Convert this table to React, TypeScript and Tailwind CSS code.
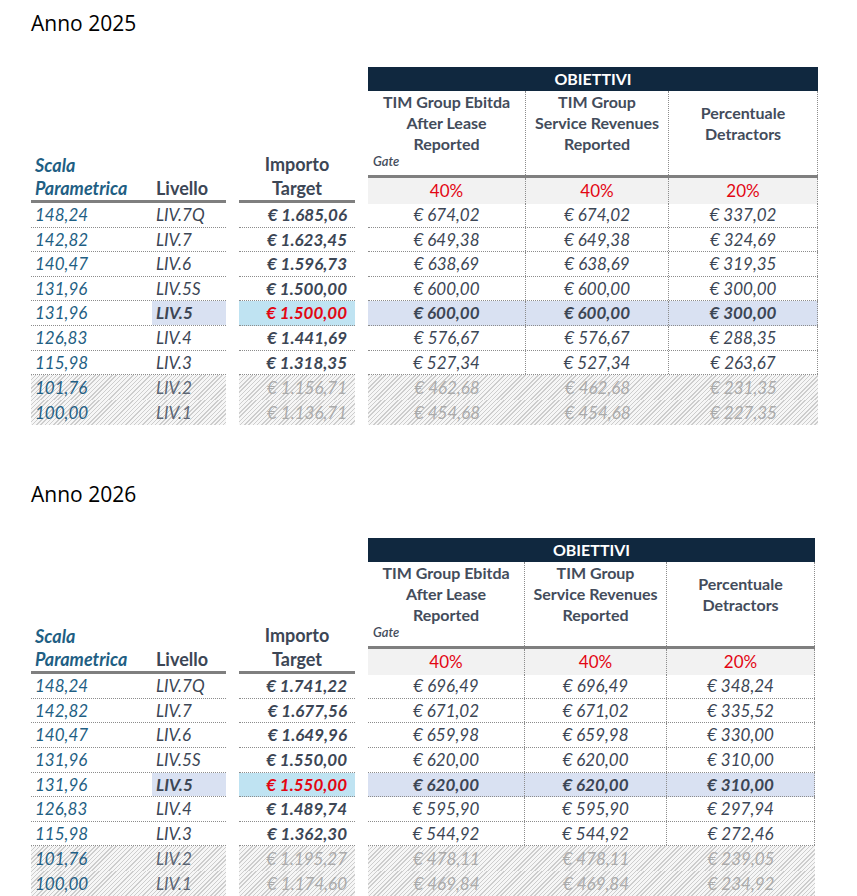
import React from 'react'

type Kind = 'normal' | 'hi' | 'off'
type Row = { scala: string; liv: string; imp: string; a: string; b: string; c: string; kind: Kind }
type Cols = { o1: string; o2: string; o3: string }

const rows2025: Row[] = [
  { scala: '148,24', liv: 'LIV.7Q', imp: '€ 1.685,06', a: '€ 674,02', b: '€ 674,02', c: '€ 337,02', kind: 'normal' },
  { scala: '142,82', liv: 'LIV.7', imp: '€ 1.623,45', a: '€ 649,38', b: '€ 649,38', c: '€ 324,69', kind: 'normal' },
  { scala: '140,47', liv: 'LIV.6', imp: '€ 1.596,73', a: '€ 638,69', b: '€ 638,69', c: '€ 319,35', kind: 'normal' },
  { scala: '131,96', liv: 'LIV.5S', imp: '€ 1.500,00', a: '€ 600,00', b: '€ 600,00', c: '€ 300,00', kind: 'normal' },
  { scala: '131,96', liv: 'LIV.5', imp: '€ 1.500,00', a: '€ 600,00', b: '€ 600,00', c: '€ 300,00', kind: 'hi' },
  { scala: '126,83', liv: 'LIV.4', imp: '€ 1.441,69', a: '€ 576,67', b: '€ 576,67', c: '€ 288,35', kind: 'normal' },
  { scala: '115,98', liv: 'LIV.3', imp: '€ 1.318,35', a: '€ 527,34', b: '€ 527,34', c: '€ 263,67', kind: 'normal' },
  { scala: '101,76', liv: 'LIV.2', imp: '€ 1.156,71', a: '€ 462,68', b: '€ 462,68', c: '€ 231,35', kind: 'off' },
  { scala: '100,00', liv: 'LIV.1', imp: '€ 1.136,71', a: '€ 454,68', b: '€ 454,68', c: '€ 227,35', kind: 'off' },
]

const rows2026: Row[] = [
  { scala: '148,24', liv: 'LIV.7Q', imp: '€ 1.741,22', a: '€ 696,49', b: '€ 696,49', c: '€ 348,24', kind: 'normal' },
  { scala: '142,82', liv: 'LIV.7', imp: '€ 1.677,56', a: '€ 671,02', b: '€ 671,02', c: '€ 335,52', kind: 'normal' },
  { scala: '140,47', liv: 'LIV.6', imp: '€ 1.649,96', a: '€ 659,98', b: '€ 659,98', c: '€ 330,00', kind: 'normal' },
  { scala: '131,96', liv: 'LIV.5S', imp: '€ 1.550,00', a: '€ 620,00', b: '€ 620,00', c: '€ 310,00', kind: 'normal' },
  { scala: '131,96', liv: 'LIV.5', imp: '€ 1.550,00', a: '€ 620,00', b: '€ 620,00', c: '€ 310,00', kind: 'hi' },
  { scala: '126,83', liv: 'LIV.4', imp: '€ 1.489,74', a: '€ 595,90', b: '€ 595,90', c: '€ 297,94', kind: 'normal' },
  { scala: '115,98', liv: 'LIV.3', imp: '€ 1.362,30', a: '€ 544,92', b: '€ 544,92', c: '€ 272,46', kind: 'normal' },
  { scala: '101,76', liv: 'LIV.2', imp: '€ 1.195,27', a: '€ 478,11', b: '€ 478,11', c: '€ 239,05', kind: 'off' },
  { scala: '100,00', liv: 'LIV.1', imp: '€ 1.174,60', a: '€ 469,84', b: '€ 469,84', c: '€ 234,92', kind: 'off' },
]

// excel-like light diagonal hatch for the "off" levels
const hatch = 'bg-[repeating-linear-gradient(135deg,#cdcdcd_0px,#cdcdcd_1px,#f6f6f6_1px,#f6f6f6_3px)]'
const dotB = 'border-b border-dotted border-[#8c8c8c]'
const dotR = 'border-r border-dotted border-[#8c8c8c]'
const thick = 'border-b-[3px] border-[#7f7f7f]'

function DataRow({ r, cols }: { r: Row; cols: Cols }) {
  const off = r.kind === 'off'
  const hi = r.kind === 'hi'
  const line = off ? '' : dotB
  const h = off ? 'h-[25px]' : 'h-[24.6px]'
  const val = off ? 'text-[#ababab]' : 'text-[#3c4655]'
  const objBg = off ? hatch : hi ? 'bg-[#d9e1f2]' : ''
  const objText = hi ? 'font-bold' : ''
  const div = off ? '' : dotR

  return (
    <div className={`flex ${h}`}>
      <div className={`flex w-[195px] ${line} ${off ? hatch : ''}`}>
        <div className="w-[121px] pl-[4px] flex items-center text-[#1f5f84] italic">{r.scala}</div>
        <div className={`w-[74px] pl-[4px] flex items-center italic ${hi ? 'bg-[#d9e1f2] font-bold text-[#3c4655]' : off ? 'text-[#5b6573]' : 'text-[#3c4655]'}`}>
          {r.liv}
        </div>
      </div>
      <div className="w-[13px]" />
      <div
        className={`w-[116px] pr-[8px] flex items-center justify-end italic ${line} ${
          off ? `${hatch} text-[#ababab]` : hi ? 'bg-[#bfe3f2] font-bold text-[#e30613]' : 'font-bold text-[#3c4655]'
        }`}
      >
        {r.imp}
      </div>
      <div className="w-[13px]" />
      <div className={`flex ${line} ${objBg}`}>
        <div className={`${cols.o1} ${div} flex items-center justify-center italic ${val} ${objText}`}>{r.a}</div>
        <div className={`${cols.o2} ${div} flex items-center justify-center italic ${val} ${objText}`}>{r.b}</div>
        <div className={`${cols.o3} ${div} flex items-center justify-center italic ${val} ${objText}`}>{r.c}</div>
      </div>
    </div>
  )
}

function Section({ year, rows, cols }: { year: string; rows: Row[]; cols: Cols }) {
  return (
    <section>
      <h2 className="h-[30px] leading-[30px] text-[21px] text-black font-['Open_Sans',sans-serif] mb-[29px]">Anno {year}</h2>

      <div className="flex h-[136px]">
        <div className={`flex w-[195px] items-end ${thick} text-[18px] font-bold leading-[23px]`}>
          <div className="w-[121px] pl-[4px] italic text-[#1f5f84]">
            Scala
            <br />
            Parametrica
          </div>
          <div className="w-[74px] pl-[4px] text-[#3c4655]">Livello</div>
        </div>
        <div className="w-[13px]" />
        <div className={`w-[116px] flex items-end justify-center text-center ${thick} text-[18px] font-bold leading-[24px] text-[#3c4655]`}>
          <div>
            Importo
            <br />
            Target
          </div>
        </div>
        <div className="w-[13px]" />
        <div className={`flex flex-col ${thick}`}>
          <div className="h-[25px] bg-[#10283f] text-white font-bold text-[16px] flex items-center justify-center">OBIETTIVI</div>
          <div className={`flex h-[87px] ${thick} text-[16px] font-bold leading-[21px] text-[#434c5b] text-center`}>
            <div className={`${cols.o1} ${dotR} flex flex-col justify-between`}>
              <div>
                TIM Group Ebitda
                <br />
                After Lease
                <br />
                Reported
              </div>
              <div className="text-left pl-[5px] pb-[6px] text-[13px] leading-[15px] italic font-semibold">Gate</div>
            </div>
            <div className={`${cols.o2} ${dotR}`}>
              TIM Group
              <br />
              Service Revenues
              <br />
              Reported
            </div>
            <div className={`${cols.o3} ${dotR} pt-[11px]`}>
              Percentuale
              <br />
              Detractors
            </div>
          </div>
          <div className="flex flex-1 bg-[#f2f2f2] text-[17px] text-[#e30613]">
            <div className={`${cols.o1} ${dotR} flex items-center justify-center`}>40%</div>
            <div className={`${cols.o2} ${dotR} flex items-center justify-center`}>40%</div>
            <div className={`${cols.o3} ${dotR} flex items-center justify-center`}>20%</div>
          </div>
        </div>
      </div>

      <div className="text-[17px]">
        {rows.map((r, i) => (
          <DataRow key={i} r={r} cols={cols} />
        ))}
      </div>
    </section>
  )
}

export default function App() {
  return (
    <div className="min-h-screen bg-white pt-[8px] pl-[31px] font-['Lato',sans-serif]">
      <Section year="2025" rows={rows2025} cols={{ o1: 'w-[158px]', o2: 'w-[143px]', o3: 'w-[149px]' }} />
      <div className="h-[54px]" />
      <Section year="2026" rows={rows2026} cols={{ o1: 'w-[157px]', o2: 'w-[142px]', o3: 'w-[148px]' }} />
    </div>
  )
}
